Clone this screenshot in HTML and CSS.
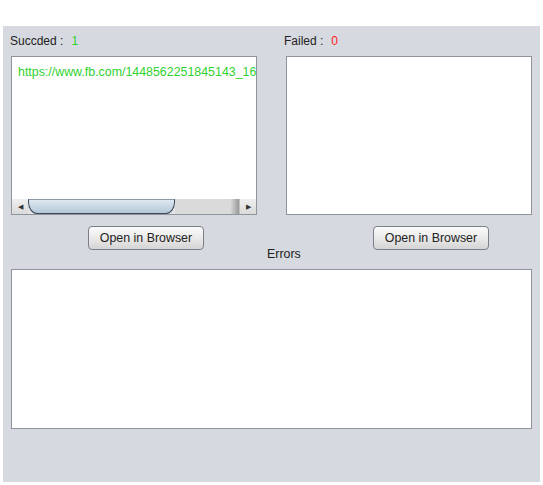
FILE: index.html
```html
<!DOCTYPE html>
<html lang="en">
  <head>
    <meta charset="UTF-8" />
    <title>Link Checker</title>
    <link rel="stylesheet" href="styles.css">
  </head>
  <body>
    <main class="panel">
      <div class="columns">
        <div class="column">
          <div class="status status-left">
            <span>Succded :</span>
            <span class="count ok">1</span>
          </div>
          <div class="list-box">
            <div class="list-items">
              <div class="item ok">https://www.fb.com/1448562251845143_16</div>
            </div>
            <div class="hscroll">
              <span class="arrow">&#9664;</span>
              <span class="thumb"></span>
              <span class="track"></span>
              <span class="arrow">&#9654;</span>
            </div>
          </div>
          <div class="actions actions-left">
            <button type="button">Open in Browser</button>
          </div>
        </div>

        <div class="column">
          <div class="status status-right">
            <span>Failed :</span>
            <span class="count fail">0</span>
          </div>
          <div class="list-box"></div>
          <div class="actions actions-right">
            <button type="button">Open in Browser</button>
          </div>
        </div>
      </div>

      <div class="errors-label">Errors</div>
      <div class="errors-box"></div>
    </main>
  </body>
</html>
```

FILE: styles.css
```css
:root {
  --panel: #d6d9df;
  --border: #8f939c;
  --text: #222222;
  --ok: #2fd12f;
  --fail: #ff2020;
}

* {
  margin: 0;
  padding: 0;
  box-sizing: border-box;
}

body {
  background-color: #ffffff;
  font-family: "Liberation Sans", Arial, sans-serif;
  font-size: 12.4px;
  line-height: 14px;
  color: var(--text);
}

.panel {
  margin: 26px 3px 0 3px;
  height: 456px;
  padding: 0 8px;
  background-color: var(--panel);
}

.columns {
  display: grid;
  grid-template-columns: 246px 246px;
  column-gap: 29px;
}

.status {
  padding-top: 8px;
  height: 30px;
  display: flex;
  gap: 7px;
  font-size: 12px;
}

.status-left {
  margin-left: -1px;
}

.status-right {
  margin-left: -2px;
}

.count {
  padding-left: 1px;
}

.ok {
  color: var(--ok);
}

.fail {
  color: var(--fail);
}

.list-box {
  height: 159px;
  background-color: #ffffff;
  border: 1px solid var(--border);
  display: flex;
  flex-direction: column;
  overflow: hidden;
}

.list-items {
  flex: 1;
  padding: 8px 0 0 6px;
  overflow: hidden;
}

.item {
  white-space: nowrap;
}

.hscroll {
  height: 15px;
  display: flex;
  background-color: #e4e4e4;
}

.arrow {
  width: 16px;
  font-size: 7px;
  line-height: 15px;
  text-align: center;
  color: #333333;
  background: linear-gradient(#efefef, #dadada);
}

.thumb {
  width: 147px;
  border: 1px solid #3d4a5a;
  border-top-color: #8a9aaa;
  border-radius: 0 0 9px 9px / 0 0 12px 12px;
  background: linear-gradient(#dfe8f1, #b4c7d9);
}

.track {
  flex: 1;
  background: linear-gradient(90deg, #dadada 85%, #9a9a9a 98%, #dadada);
}

.actions {
  margin-top: 11px;
  display: flex;
}

.actions-left {
  padding-left: 77px;
}

.actions-right {
  padding-left: 87px;
}

button {
  width: 116px;
  height: 24px;
  font-family: inherit;
  font-size: 12.4px;
  color: var(--text);
  border: 1px solid #7c8089;
  border-radius: 4px;
  background: linear-gradient(#fbfbfb, #e6e6e6 60%, #d4d4d4);
}

.errors-label {
  margin-top: -3px;
  padding-left: 256px;
  height: 14px;
}

.errors-box {
  margin-top: 8px;
  height: 160px;
  background-color: #ffffff;
  border: 1px solid var(--border);
}
```
